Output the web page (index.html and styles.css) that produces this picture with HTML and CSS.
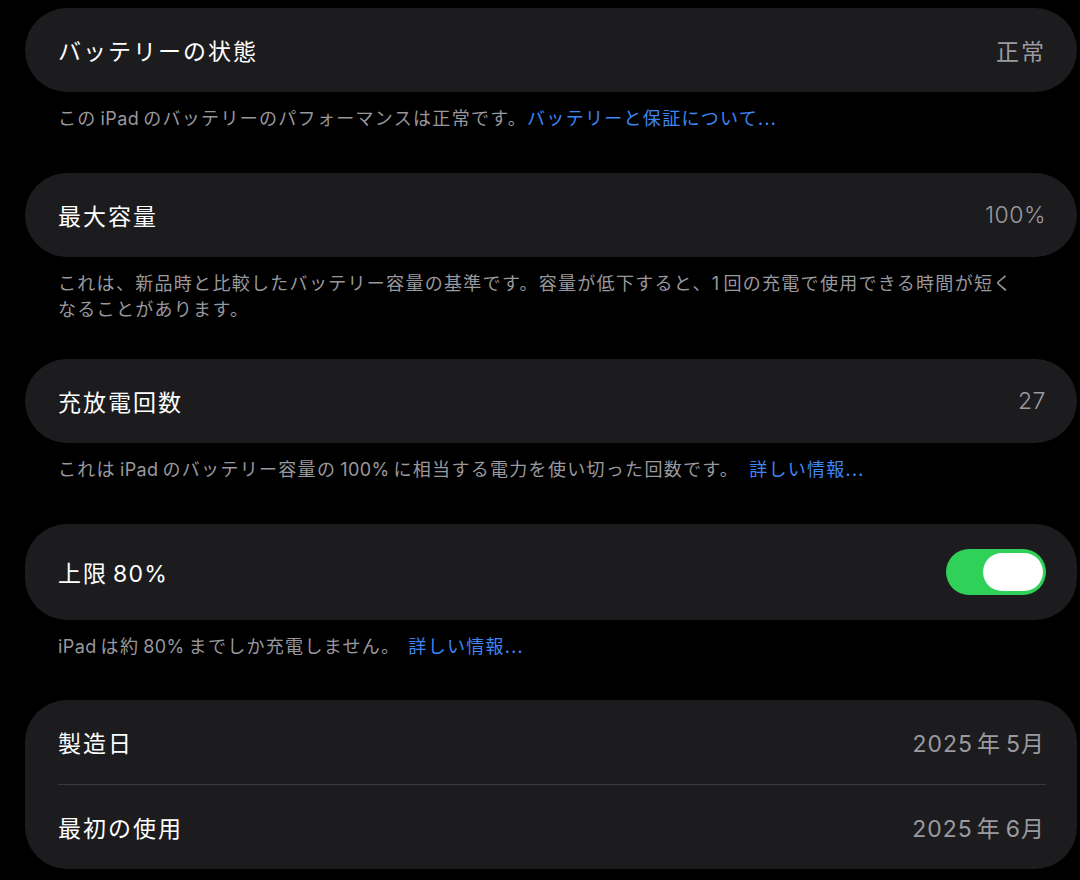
FILE: index.html
```html
<!DOCTYPE html>
<html lang="ja">
<head>
<meta charset="utf-8">
<title>バッテリー</title>
<link rel="stylesheet" href="styles.css">
</head>
<body>
<main class="page">
  <section class="group">
    <div class="card">
      <div class="row"><span class="label">バッテリーの状態</span><span class="value">正常</span></div>
    </div>
    <p class="note">この<span class="lat">iPad</span>のバッテリーのパフォーマンスは正常です。<a class="link">バッテリーと保証について...</a></p>
  </section>

  <section class="group">
    <div class="card">
      <div class="row"><span class="label">最大容量</span><span class="value lat-val">100%</span></div>
    </div>
    <p class="note note-2">これは、新品時と比較したバッテリー容量の基準です。容量が低下すると、<span class="lat lat-l">1</span>回の充電で使用できる時間が短く<br>なることがあります。</p>
  </section>

  <section class="group">
    <div class="card">
      <div class="row"><span class="label">充放電回数</span><span class="value lat-val">27</span></div>
    </div>
    <p class="note">これは<span class="lat">iPad</span>のバッテリー容量の<span class="lat">100%</span>に相当する電力を使い切った回数です。<a class="link link-gap">詳しい情報...</a></p>
  </section>

  <section class="group">
    <div class="card">
      <div class="row row-toggle"><span class="label">上限<span class="lat lat-r">80%</span></span>
        <span class="toggle on"><span class="knob"></span></span>
      </div>
    </div>
    <p class="note note-4"><span class="lat lat-l">iPad</span>は約<span class="lat">80%</span>までしか充電しません。<a class="link link-gap link-gap-s">詳しい情報...</a></p>
  </section>

  <section class="group">
    <div class="card">
      <div class="row"><span class="label">製造日</span><span class="value"><span class="lat lat-l">2025</span>年<span class="lat lat-r">5</span>月</span></div>
      <div class="sep"></div>
      <div class="row"><span class="label">最初の使用</span><span class="value"><span class="lat lat-l">2025</span>年<span class="lat lat-r">6</span>月</span></div>
    </div>
  </section>
</main>
</body>
</html>
```

FILE: styles.css
```css
html, body {
  margin: 0;
  padding: 0;
  background: #000;
}

body {
  font-family: "Noto Sans CJK JP", "Noto Sans", sans-serif;
  color: #fff;
  width: 1080px;
  height: 880px;
  overflow: hidden;
}

.page {
  display: flex;
  flex-direction: column;
  padding: 8px 3px 0 25px;
}

.group {
  display: flex;
  flex-direction: column;
}

.card {
  background: #1c1c1e;
  border-radius: 42px;
  display: flex;
  flex-direction: column;
}

.row {
  height: 84px;
  display: flex;
  align-items: center;
  justify-content: space-between;
  padding: 0 33px;
}

.row-toggle {
  height: 96px;
  padding-right: 31px;
}

.label {
  font-size: 23px;
  letter-spacing: 2px;
  font-weight: 400;
}

.value {
  font-size: 23px;
  letter-spacing: 2px;
  color: #9a9aa0;
  margin-right: -2px;
}

.lat {
  font-family: "Inter", "Noto Sans", sans-serif;
  letter-spacing: 0.4px;
  margin: 0 4px;
}

.lat-l {
  margin-left: 0;
}

.lat-r {
  margin-right: 0;
  letter-spacing: 1px;
}

.label .lat {
  letter-spacing: 1.2px;
  margin-left: 5px;
}

.lat-val {
  font-family: "Inter", "Noto Sans", sans-serif;
  letter-spacing: 0.5px;
  font-weight: 300;
}

.value .lat {
  font-weight: 400;
}

.value .lat-l {
  letter-spacing: 1px;
}

.sep {
  height: 1px;
  background: #3a3a3e;
  margin: 0 31px 0 33px;
}

.note {
  margin: 0;
  padding: 13px 33px 42px;
  font-size: 18px;
  line-height: 25px;
  letter-spacing: 1.3px;
  color: #98989e;
}

.note-2 {
  padding-bottom: 38px;
}

.note-4 {
  padding-bottom: 41px;
}

.link {
  color: #3d86f5;
}

.link-gap {
  margin-left: 10px;
}

.link-gap-s {
  margin-left: 8px;
}

.toggle {
  width: 100px;
  height: 46px;
  border-radius: 23px;
  background: #30d158;
  display: flex;
  align-items: center;
  justify-content: flex-end;
  padding: 0 3px;
  box-sizing: border-box;
}

.knob {
  width: 60px;
  height: 38px;
  border-radius: 19px;
  background: #fff;
}
```
